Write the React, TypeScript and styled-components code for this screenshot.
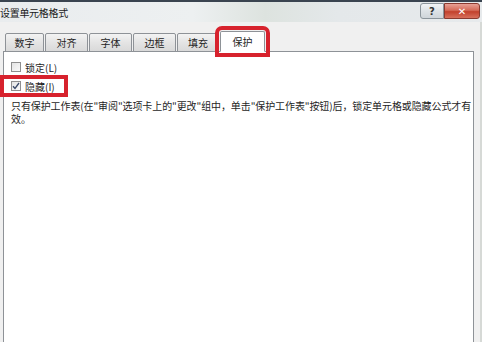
import React from "react";
import styled, { createGlobalStyle } from "styled-components";

const Global = createGlobalStyle`
  html, body { margin: 0; padding: 0; }
  body {
    width: 482px; height: 342px; overflow: hidden;
    background: #f0f0f0;
    font-family: "Noto Sans CJK SC", "Noto Sans", sans-serif;
  }
`;

const Window = styled.div`
  display: flex; flex-direction: column;
  width: 482px; height: 342px;
  background: #f0f0f0;
  box-sizing: border-box;
`;

const TitleBar = styled.div`
  display: flex; align-items: center; justify-content: space-between;
  height: 22px;
  border-top: 2px solid #3a4450;
  background: linear-gradient(90deg, #e9ecee 0%, #edf0f1 40%, #dde3df 55%, #e4e8ea 70%, #e7eaec 100%);
  box-sizing: border-box;
  padding-right: 2px;
`;

const Title = styled.span`
  font-size: 10px; color: #1a1a1a;
  margin-left: 0; letter-spacing: -0.3px;
`;

const Controls = styled.div`
  display: flex; align-self: flex-start; margin-top: 1px;
`;

const CtrlButton = styled.div<{ $close?: boolean }>`
  display: flex; align-items: center; justify-content: center;
  width: ${p => (p.$close ? "36px" : "24px")};
  height: 16px;
  box-sizing: border-box;
  border: 1px solid ${p => (p.$close ? "#8a3a30" : "#8c959c")};
  border-radius: ${p => (p.$close ? "0 3px 3px 0" : "3px 0 0 3px")};
  background: ${p =>
    p.$close
      ? "linear-gradient(180deg, #e8a094 0%, #d46a58 45%, #c2402c 55%, #d8705c 100%)"
      : "linear-gradient(180deg, #f2f4f6 0%, #dde2e6 50%, #cfd5da 100%)"};
  color: ${p => (p.$close ? "#fff" : "#333")};
  font-size: 10px; font-weight: bold;
  font-family: "DejaVu Sans", sans-serif;
`;

const Body = styled.div`
  flex: 1; display: flex; flex-direction: column;
  padding: 9px 6px 0 3px;
  border-right: 2px solid #d6d9d6;
  min-height: 0;
`;

const TabRow = styled.div`
  display: flex; align-items: flex-end;
  padding-left: 2px; height: 21px;
  position: relative; z-index: 1;
`;

const Tab = styled.div<{ $w: number; $active?: boolean }>`
  display: flex; align-items: center; justify-content: center;
  width: ${p => p.$w}px;
  height: ${p => (p.$active ? "21px" : "19px")};
  margin-right: ${p => (p.$active ? "0" : "1px")};
  box-sizing: border-box;
  border: 1px solid #8e9297;
  border-bottom: ${p => (p.$active ? "1px solid #fff" : "1px solid #8e9297")};
  border-radius: 2px 2px 0 0;
  background: ${p => (p.$active ? "#fff" : "linear-gradient(180deg, #f3f3f3 0%, #e4e4e4 50%, #d9d9d9 100%)")};
  font-size: 10px; color: #1e1e1e;
  outline: ${p => (p.$active ? "4px solid #d7222d" : "none")};
  outline-offset: ${p => (p.$active ? "1px" : "0")};
`;

const Panel = styled.div`
  flex: 1; margin-top: -1px;
  background: #fff;
  border: 1px solid #8e9297;
  border-bottom: none;
  padding: 9px 0 0 7px;
  display: flex; flex-direction: column;
  font-size: 10px; color: #1e1e1e;
`;

const CheckRow = styled.div<{ $mark?: boolean }>`
  display: flex; align-items: center; gap: 4px;
  height: ${p => (p.$mark ? "14px" : "12px")};
  margin-top: ${p => (p.$mark ? "6px" : "0")};
  margin-left: ${p => (p.$mark ? "-7px" : "0")};
  padding: ${p => (p.$mark ? "0 9px 0 7px" : "0")};
  align-self: flex-start;
  outline: ${p => (p.$mark ? "4px solid #d7222d" : "none")};
`;

const Box = styled.span`
  display: inline-flex; align-items: center; justify-content: center;
  width: 10px; height: 10px; box-sizing: border-box;
  border: 1px solid #8f8f8f;
  background: linear-gradient(135deg, #e4e4e4 0%, #fafafa 100%);
`;

const Note = styled.p`
  margin: 6px 0 0 0;
  font-size: 10px; line-height: 13px; color: #1e1e1e;
  letter-spacing: -0.1px;
  white-space: nowrap;
`;

const Check = () => (
  <svg width="8" height="8" viewBox="0 0 8 8">
    <path d="M1 4.2 L3 6.5 L7 1" fill="none" stroke="#3a4a6a" strokeWidth="1.3" />
  </svg>
);

const tabs: { label: string; w: number }[] = [
  { label: "数字", w: 39 },
  { label: "对齐", w: 43 },
  { label: "字体", w: 43 },
  { label: "边框", w: 43 },
  { label: "填充", w: 42 },
];

export default function App() {
  return (
    <>
      <Global />
      <Window>
        <TitleBar>
          <Title>设置单元格格式</Title>
          <Controls>
            <CtrlButton>?</CtrlButton>
            <CtrlButton $close>✕</CtrlButton>
          </Controls>
        </TitleBar>
        <Body>
          <TabRow>
            {tabs.map(t => (
              <Tab key={t.label} $w={t.w}>{t.label}</Tab>
            ))}
            <Tab $w={45} $active>保护</Tab>
          </TabRow>
          <Panel>
            <CheckRow>
              <Box />
              <span>锁定(L)</span>
            </CheckRow>
            <CheckRow $mark>
              <Box><Check /></Box>
              <span>隐藏(I)</span>
            </CheckRow>
            <Note>
              只有保护工作表(在"审阅"选项卡上的"更改"组中，单击"保护工作表"按钮)后，锁定单元格或隐藏公式才有
              <br />
              效。
            </Note>
          </Panel>
        </Body>
      </Window>
    </>
  );
}
